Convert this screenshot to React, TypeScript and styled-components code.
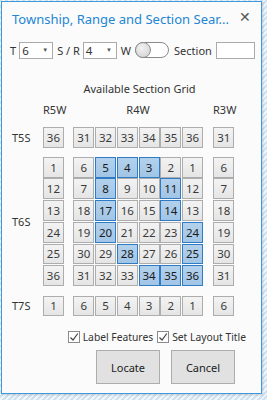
import React from 'react';
import styled, { createGlobalStyle } from 'styled-components';

const GlobalStyle = createGlobalStyle`
  html, body {
    margin: 0;
    padding: 0;
  }
  body {
    width: 267px;
    height: 400px;
    overflow: hidden;
    font-family: "Noto Sans", "Open Sans", sans-serif;
    background: repeating-linear-gradient(135deg, #cfe2f2 0 2px, #f1f6fa 2px 4px);
  }
`;

const Window = styled.div`
  box-sizing: border-box;
  margin: 1px 0 0 1px;
  width: 261px;
  height: 393px;
  border: 1px solid #3f97dc;
  background: #fbfbfb;
  display: flex;
  flex-direction: column;
  box-shadow: 1px 1px 2px rgba(0, 0, 0, 0.15);
`;

const TitleBar = styled.div`
  display: flex;
  align-items: center;
  justify-content: space-between;
  height: 30px;
  padding: 2px 10px 0 10px;
`;

const Title = styled.div`
  font-size: 13px;
  color: #2286d4;
  white-space: nowrap;
`;

const Close = styled.div`
  font-size: 14px;
  color: #555;
  line-height: 1;
  margin-top: -4px;
`;

const Controls = styled.div`
  display: flex;
  align-items: center;
  height: 18px;
  margin-top: 7px;
  padding-left: 8px;
  font-size: 11px;
  color: #333;
`;

const Label = styled.span<{ $gap?: number }>`
  margin-right: ${p => p.$gap ?? 3}px;
  white-space: nowrap;
`;

const Select = styled.div`
  box-sizing: border-box;
  width: 34px;
  height: 17px;
  border: 1px solid #ababab;
  background: #fff;
  display: flex;
  align-items: center;
  justify-content: space-between;
  padding: 0 4px 0 2px;
  margin-right: 4px;
  font-size: 11.5px;
`;

const Caret = styled.span`
  font-size: 6px;
  color: #555;
`;

const Toggle = styled.div`
  box-sizing: border-box;
  width: 34px;
  height: 16px;
  border: 1px solid #8a8a8a;
  border-radius: 8px;
  background: #fff;
  position: relative;
  margin: 0 5px 0 3px;
`;

const Knob = styled.div`
  position: absolute;
  left: -1px;
  top: -1px;
  width: 16px;
  height: 16px;
  box-sizing: border-box;
  border-radius: 50%;
  border: 1px solid #8f8f8f;
  background: radial-gradient(circle at 40% 35%, #f2f2f2, #cfcfcf);
`;

const TextInput = styled.div`
  box-sizing: border-box;
  width: 39px;
  height: 17px;
  border: 1px solid #ababab;
  background: #fff;
  margin-left: 4px;
`;

const GridTitle = styled.div`
  text-align: center;
  font-size: 11px;
  color: #333;
  margin-top: 22px;
  padding-left: 16px;
`;

const Board = styled.div`
  display: flex;
  flex-direction: column;
  padding-left: 10px;
  margin-top: 6px;
`;

const TownshipRow = styled.div<{ $gap?: number }>`
  display: flex;
  align-items: center;
  margin-top: ${p => p.$gap ?? 0}px;
`;

const RowLabel = styled.div`
  width: 31px;
  font-size: 11px;
  color: #333;
`;

const Block = styled.div<{ $cols: number; $gap?: number }>`
  display: grid;
  grid-template-columns: repeat(${p => p.$cols}, 20.9px);
  grid-auto-rows: 20.8px;
  gap: 0.9px;
  margin-left: ${p => p.$gap ?? 0}px;
`;

const HeadCell = styled.div<{ $w: number; $gap?: number }>`
  width: ${p => p.$w}px;
  margin-left: ${p => p.$gap ?? 0}px;
  text-align: center;
  font-size: 11px;
  color: #333;
`;

const Cell = styled.div<{ $on?: boolean }>`
  box-sizing: border-box;
  display: flex;
  align-items: center;
  justify-content: center;
  font-size: 11.5px;
  color: ${p => (p.$on ? '#1a1a1a' : '#3a3a3a')};
  border: 1px solid ${p => (p.$on ? '#2f7cc4' : '#adadad')};
  background: ${p =>
    p.$on ? 'linear-gradient(#b3d1ec, #a2c5e6)' : 'linear-gradient(#f3f3f3, #e5e5e5)'};
`;

const Options = styled.div`
  display: flex;
  justify-content: flex-end;
  align-items: center;
  gap: 4px;
  padding-right: 15px;
  margin-top: 14px;
  font-size: 10.3px;
  color: #333;
`;

const Check = styled.label`
  display: flex;
  align-items: center;
  gap: 3px;
  white-space: nowrap;
`;

const Box = styled.span`
  box-sizing: border-box;
  width: 12px;
  height: 12px;
  border: 1px solid #8a8a8a;
  background: #fff;
  display: flex;
  align-items: center;
  justify-content: center;
`;

const Actions = styled.div`
  display: flex;
  justify-content: flex-end;
  gap: 11px;
  padding-right: 26px;
  margin-top: 6px;
`;

const Button = styled.div`
  box-sizing: border-box;
  width: 64px;
  height: 34px;
  border: 1px solid #adadad;
  background: #e1e1e1;
  display: flex;
  align-items: center;
  justify-content: center;
  font-size: 11px;
  color: #222;
`;

const Tick = () => (
  <svg width="10" height="10" viewBox="0 0 10 10">
    <path d="M1.5 5.5 L4 8 L8.8 1.5" fill="none" stroke="#444" strokeWidth="1.2" />
  </svg>
);

const on = new Set([5, 4, 3, 8, 11, 17, 14, 20, 24, 28, 25, 34, 35, 36]);

const r4w = [
  [6, 5, 4, 3, 2, 1],
  [7, 8, 9, 10, 11, 12],
  [18, 17, 16, 15, 14, 13],
  [19, 20, 21, 22, 23, 24],
  [30, 29, 28, 27, 26, 25],
  [31, 32, 33, 34, 35, 36],
];
const r5w = [1, 12, 13, 24, 25, 36];
const r3w = [6, 7, 18, 19, 30, 31];

export default function App() {
  return (
    <>
      <GlobalStyle />
      <Window>
        <TitleBar>
          <Title>Township, Range and Section Sear...</Title>
          <Close>✕</Close>
        </TitleBar>

        <Controls>
          <Label>T</Label>
          <Select>
            6<Caret>▼</Caret>
          </Select>
          <Label $gap={3}>S / R</Label>
          <Select>
            4<Caret>▼</Caret>
          </Select>
          <Label $gap={1}>W</Label>
          <Toggle>
            <Knob />
          </Toggle>
          <Label $gap={0}>Section</Label>
          <TextInput />
        </Controls>

        <GridTitle>Available Section Grid</GridTitle>

        <Board>
          <TownshipRow>
            <RowLabel />
            <HeadCell $w={21}>R5W</HeadCell>
            <HeadCell $w={130} $gap={9}>R4W</HeadCell>
            <HeadCell $w={21} $gap={10}>R3W</HeadCell>
          </TownshipRow>

          <TownshipRow $gap={10}>
            <RowLabel>T5S</RowLabel>
            <Block $cols={1}>
              <Cell>36</Cell>
            </Block>
            <Block $cols={6} $gap={9.4}>
              {[31, 32, 33, 34, 35, 36].map(n => (
                <Cell key={n}>{n}</Cell>
              ))}
            </Block>
            <Block $cols={1} $gap={10.3}>
              <Cell>31</Cell>
            </Block>
          </TownshipRow>

          <TownshipRow $gap={9}>
            <RowLabel>T6S</RowLabel>
            <Block $cols={1}>
              {r5w.map(n => (
                <Cell key={n}>{n}</Cell>
              ))}
            </Block>
            <Block $cols={6} $gap={9.4}>
              {r4w.flat().map(n => (
                <Cell key={n} $on={on.has(n)}>
                  {n}
                </Cell>
              ))}
            </Block>
            <Block $cols={1} $gap={10.3}>
              {r3w.map(n => (
                <Cell key={n}>{n}</Cell>
              ))}
            </Block>
          </TownshipRow>

          <TownshipRow $gap={9.5}>
            <RowLabel>T7S</RowLabel>
            <Block $cols={1}>
              <Cell>1</Cell>
            </Block>
            <Block $cols={6} $gap={9.4}>
              {[6, 5, 4, 3, 2, 1].map(n => (
                <Cell key={n}>{n}</Cell>
              ))}
            </Block>
            <Block $cols={1} $gap={10.3}>
              <Cell>6</Cell>
            </Block>
          </TownshipRow>
        </Board>

        <Options>
          <Check>
            <Box>
              <Tick />
            </Box>
            Label Features
          </Check>
          <Check>
            <Box>
              <Tick />
            </Box>
            Set Layout Title
          </Check>
        </Options>

        <Actions>
          <Button>Locate</Button>
          <Button>Cancel</Button>
        </Actions>
      </Window>
    </>
  );
}
